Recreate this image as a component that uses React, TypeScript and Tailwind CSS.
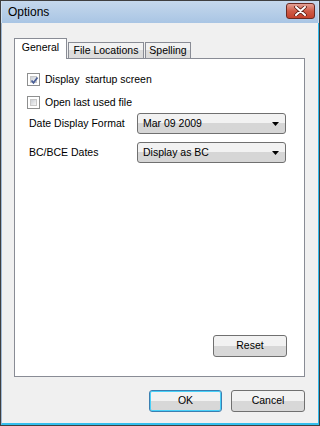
import React from "react";

const font = { fontFamily: '"Liberation Sans", Arial, sans-serif' };

function Checkbox({ checked }: { checked?: boolean }) {
  return (
    <div className="w-[13px] h-[13px] border border-[#8e8f8f] bg-white p-[2px] shrink-0">
      <div className="w-full h-full bg-gradient-to-br from-[#cbcfd5] to-[#f6f6f6] border border-[#c8c8c8] relative">
        {checked && (
          <svg viewBox="0 0 9 9" className="absolute -left-[1px] -top-[1px] w-[9px] h-[9px]">
            <path d="M1.5 4.5 L3.5 6.8 L7.5 1.5" stroke="#4a5f97" strokeWidth="1.8" fill="none" />
          </svg>
        )}
      </div>
    </div>
  );
}

function Select({ value }: { value: string }) {
  return (
    <div className="w-[149px] h-[21px] rounded-[3px] border border-[#707070] bg-gradient-to-b from-[#f2f2f2] from-50% to-[#d6d6d6] to-50% flex items-center pl-[5px] pr-[6px] text-[10.5px] text-black">
      <span className="flex-1">{value}</span>
      <svg width="7" height="4" viewBox="0 0 7 4">
        <path d="M0 0 H7 L3.5 4 Z" fill="#000" />
      </svg>
    </div>
  );
}

function Button({ label, focus, w }: { label: string; focus?: boolean; w: string }) {
  return (
    <div
      className={`${w} h-[22px] rounded-[3px] border flex items-center justify-center text-[10.5px] text-black bg-gradient-to-b from-[#f2f2f2] from-50% to-[#d8d8d8] to-50% ${
        focus ? "border-[#3c7fb1] shadow-[inset_0_0_0_1px_#48d0f8]" : "border-[#707070]"
      }`}
    >
      {label}
    </div>
  );
}

export default function App() {
  return (
    <div style={font} className="w-[320px] h-[426px] border border-[#3f3f3f] flex flex-col bg-[#f0f0f0]">
      {/* title bar */}
      <div className="h-[22px] bg-gradient-to-b from-[#c5d8ec] to-[#a9c5e4] border-l border-r border-[#cfe0f1] flex items-center pl-[6px] pr-[3px]">
        <span className="flex-1 text-[12px] text-black">Options</span>
        <div className="w-[29px] h-[16px] mt-[-3px] rounded-[3px] border border-[#6b2a22] bg-gradient-to-b from-[#e3a196] via-[#cf5b46] to-[#c4422c] flex items-center justify-center">
          <svg width="13" height="10" viewBox="0 0 13 10">
            <path d="M2 1 L11 9 M11 1 L2 9" stroke="#5a1d14" strokeWidth="3.6" strokeLinecap="round" />
            <path d="M2 1 L11 9 M11 1 L2 9" stroke="#fff" strokeWidth="2" strokeLinecap="round" />
          </svg>
        </div>
      </div>

      {/* body */}
      <div className="flex-1 flex flex-col border-l border-[#9fb9d6] border-r border-r-[#2fb8ec] border-b-2 border-b-[#33bfee] pt-[15px] pl-[12px] pr-[13px]">
        {/* tabs */}
        <div className="flex items-end relative z-10 -mb-px text-[10.5px] text-black">
          <div className="w-[53px] h-[21px] bg-white border border-b-0 border-[#898c95] flex items-center justify-center pb-[2px]">
            General
          </div>
          <div className="w-[76px] h-[17px] ml-[1px] bg-gradient-to-b from-[#f2f2f2] from-50% to-[#dcdcdc] to-50% border border-[#898c95] flex items-center justify-center">
            File Locations
          </div>
          <div className="w-[46px] h-[17px] ml-[1px] bg-gradient-to-b from-[#f2f2f2] from-50% to-[#dcdcdc] to-50% border border-[#898c95] flex items-center justify-center">
            Spelling
          </div>
        </div>

        {/* panel */}
        <div className="w-[291px] h-[319px] bg-white border border-[#898c95] flex flex-col pt-[14px] pl-[12px] pr-[17px] pb-[19px] text-[10.5px] text-black">
          <div className="flex items-center gap-[5px] h-[13px]">
            <Checkbox checked />
            <span>Display&nbsp; startup screen</span>
          </div>
          <div className="flex items-center gap-[5px] h-[13px] mt-[10px]">
            <Checkbox />
            <span>Open last used file</span>
          </div>
          <div className="flex items-center mt-[4px] pl-[2px]">
            <span className="w-[108px]">Date Display Format</span>
            <Select value="Mar 09 2009" />
          </div>
          <div className="flex items-center mt-[8px] pl-[2px]">
            <span className="w-[108px]">BC/BCE Dates</span>
            <Select value="Display as BC" />
          </div>

          <div className="mt-auto flex justify-end">
            <Button label="Reset" w="w-[74px]" />
          </div>
        </div>

        {/* footer buttons */}
        <div className="flex justify-end gap-[9px] mt-[13px]">
          <Button label="OK" focus w="w-[73px]" />
          <Button label="Cancel" w="w-[74px]" />
        </div>
      </div>
    </div>
  );
}
